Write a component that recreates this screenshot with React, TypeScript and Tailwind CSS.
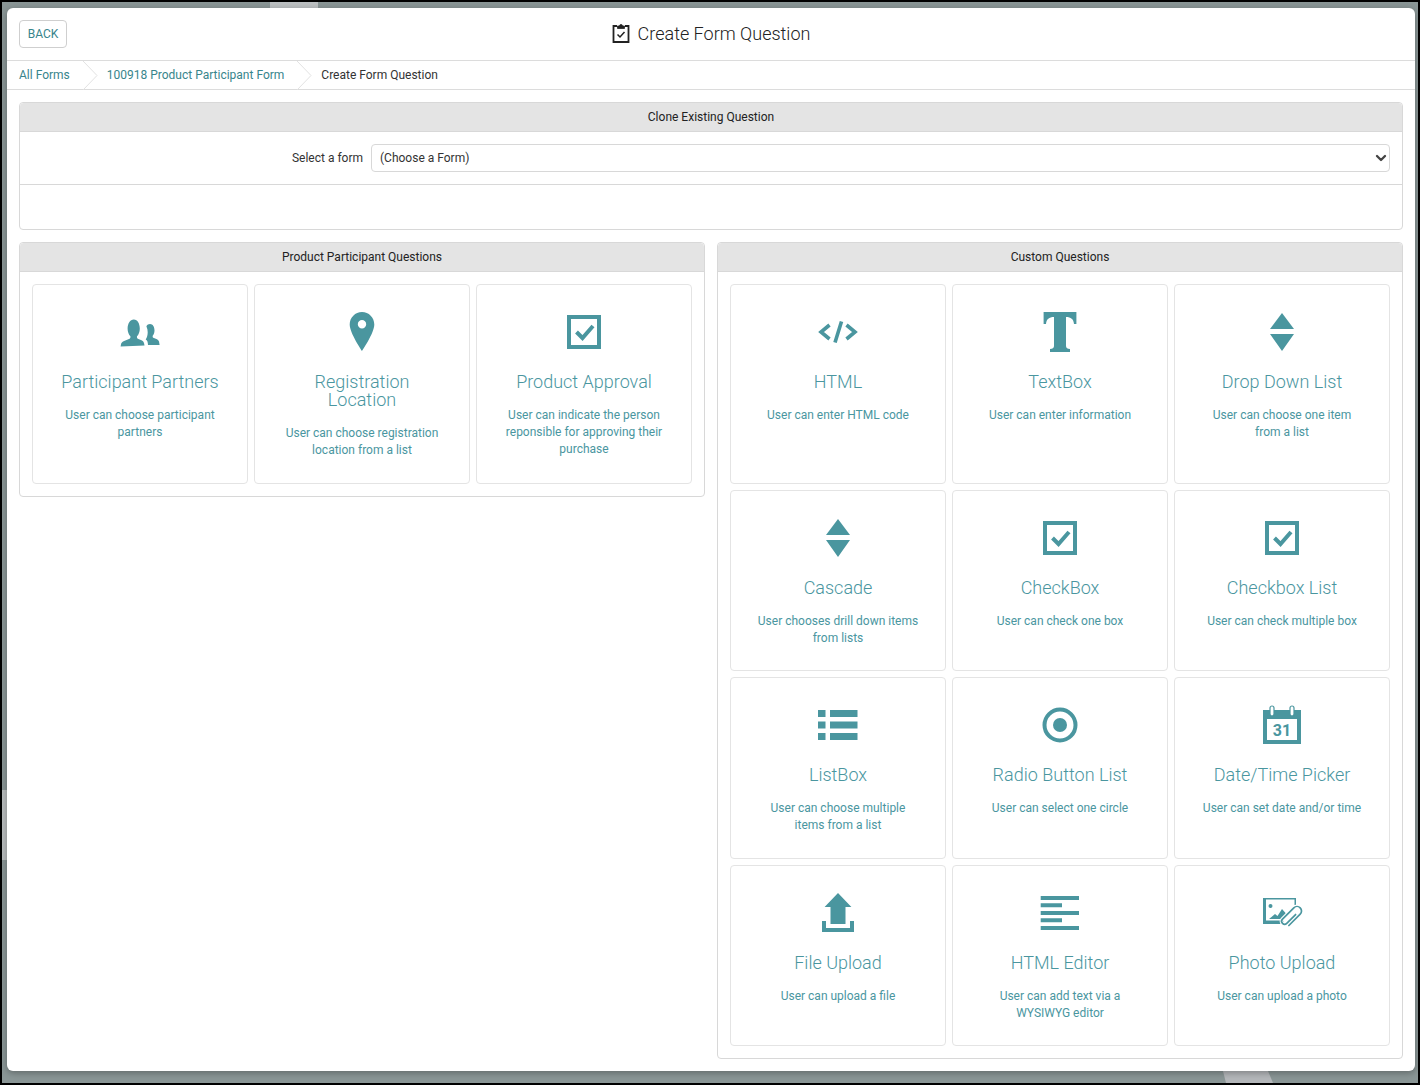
import React from 'react'
import { ChevronDown } from 'lucide-react'

const T = '#4a969f'

function Svg({ children }: { children: React.ReactNode }) {
  return (
    <svg width="44" height="44" viewBox="0 0 44 44" fill={T}>
      {children}
    </svg>
  )
}

const PeopleIcon = () => (
  <Svg>
    <path d="M26.500 35c-.4-3-1-4.300-3-5.200l-3.700-1.600c-.8-.5-1-1.500-.8-2.500 1.600-1.500 2.800-4.400 2.800-7.500 0-5-2.200-9.200-6-9.200s-6.200 4.200-6.200 9.200c0 3.100 1.200 6 2.800 7.500.2 1-.1 2-.8 2.500l-5.500 2.300c-1.600.7-2.600 1.700-3 2.700l-.5 2.800z" transform="translate(0 .5)" />
    <path d="M30 35h11.600l-.6-3.500c-.4-1-1-1.700-2-2.200l-3.700-1.500c-.6-.4-.7-1.200-.6-2 1.100-1.100 1.800-3.100 1.800-5.300 0-3.600-1.600-6.500-4.500-6.500-1.600 0-2.800.9-3.600 2.300.9 2 1.300 4 1.300 6 0 2.700-.7 5.300-2 7.200 1.500.7 2.200 2.400 2.300 5.500z" />
  </Svg>
)

const PinIcon = () => (
  <Svg>
    <path
      fillRule="evenodd"
      d="M22 2C15.200 2 9.700 7.500 9.700 14.500 9.700 23 22 41 22 41s12.300-18 12.300-26.500C34.300 7.500 28.800 2 22 2zm0 8a4.200 4.200 0 1 1 0 8.400 4.200 4.200 0 0 1 0-8.400z"
    />
  </Svg>
)

const CheckIcon = () => (
  <Svg>
    <rect x="7" y="7" width="30" height="30" fill="none" stroke={T} strokeWidth="4" />
    <path d="M14.500 22l6 6L31 16" fill="none" stroke={T} strokeWidth="4" />
  </Svg>
)

const CodeIcon = () => (
  <Svg>
    <path d="M13.500 15L5 22l8.500 7M25.500 11.500L19 32.500M30.500 15L39 22l-8.500 7" fill="none" stroke={T} strokeWidth="3.600" />
  </Svg>
)

const TextIcon = () => (
  <Svg>
    <path d="M5.600 2h32.800v12H36c-.5-5-3-7-8-7v29c0 2 1.500 3 4 3v3H12v-3c2.500 0 4-1 4-3V7c-5 0-7.500 2-8 7H5.600z" />
  </Svg>
)

const SortIcon = () => (
  <Svg>
    <path d="M22 3l12 16H10zM10 24h24L22 41z" />
  </Svg>
)

const ListIcon = () => (
  <Svg>
    <path d="M2 7h7.500v7H2zM14 7h27.500v7H14zM2 18.500h7.500v7H2zM14 18.500h27.500v7H14zM2 30h7.500v7H2zM14 30h27.500v7H14z" />
  </Svg>
)

const RadioIcon = () => (
  <Svg>
    <circle cx="22" cy="22" r="15.500" fill="none" stroke={T} strokeWidth="4" />
    <circle cx="22" cy="22" r="7" />
  </Svg>
)

const CalendarIcon = () => (
  <Svg>
    <path fillRule="evenodd" d="M3 7h38v34H3zm4 9v21h30V16z" />
    <rect x="10" y="3" width="4" height="10" rx="2" fill="#fff" stroke={T} strokeWidth="1.200" />
    <rect x="30" y="3" width="4" height="10" rx="2" fill="#fff" stroke={T} strokeWidth="1.200" />
    <text x="22" y="32.500" textAnchor="middle" fontSize="16" fontWeight="700" fontFamily="Roboto, sans-serif">
      31
    </text>
  </Svg>
)

const UploadIcon = () => (
  <Svg>
    <path d="M22 2l13.400 14H29.500v17h-15V16H8.600zM6 30h4v7h24v-7h4v11H6z" />
  </Svg>
)

const LinesIcon = () => (
  <Svg>
    <path d="M2.700 5H41v4H2.700zM2.700 12.300H24v4H2.700zM2.700 20H41v4H2.700zM2.700 27.300H24v4H2.700zM2.700 35H41v4H2.700z" />
  </Svg>
)

const PhotoIcon = () => (
  <Svg>
    <path d="M3 7h33v7h-1.500v-5.500H6v21h18V33H3z" />
    <circle cx="10.500" cy="15" r="2" />
    <path d="M9 28l6-5 2.500 2 4.500-7 4 4.500L21 28z" />
    <g transform="rotate(45 31 26)" fill="none" strokeLinecap="round">
      <path d="M33.500 21v12.500a3 3 0 0 1-6 0V17.500a4.500 4.500 0 0 1 9 0v16" stroke="#fff" strokeWidth="4" transform="translate(-1 0)" />
      <path d="M33.500 21v12.500a3 3 0 0 1-6 0V17.500a4.500 4.500 0 0 1 9 0v16" stroke={T} strokeWidth="1.700" transform="translate(-1 0)" />
    </g>
  </Svg>
)

interface CardItem {
  title: string
  text: string
  icon: React.ComponentType
}

const productCards: CardItem[] = [
  { title: 'Participant Partners', text: 'User can choose participant partners', icon: PeopleIcon },
  { title: 'Registration Location', text: 'User can choose registration location from a list', icon: PinIcon },
  { title: 'Product Approval', text: 'User can indicate the person reponsible for approving their purchase', icon: CheckIcon },
]

const customRows: { height: string; cards: CardItem[] }[] = [
  {
    height: 'h-[200px]',
    cards: [
      { title: 'HTML', text: 'User can enter HTML code', icon: CodeIcon },
      { title: 'TextBox', text: 'User can enter information', icon: TextIcon },
      { title: 'Drop Down List', text: 'User can choose one item from a list', icon: SortIcon },
    ],
  },
  {
    height: 'h-[181px]',
    cards: [
      { title: 'Cascade', text: 'User chooses drill down items from lists', icon: SortIcon },
      { title: 'CheckBox', text: 'User can check one box', icon: CheckIcon },
      { title: 'Checkbox List', text: 'User can check multiple box', icon: CheckIcon },
    ],
  },
  {
    height: 'h-[182px]',
    cards: [
      { title: 'ListBox', text: 'User can choose multiple items from a list', icon: ListIcon },
      { title: 'Radio Button List', text: 'User can select one circle', icon: RadioIcon },
      { title: 'Date/Time Picker', text: 'User can set date and/or time', icon: CalendarIcon },
    ],
  },
  {
    height: 'h-[181px]',
    cards: [
      { title: 'File Upload', text: 'User can upload a file', icon: UploadIcon },
      { title: 'HTML Editor', text: 'User can add text via a WYSIWYG editor', icon: LinesIcon },
      { title: 'Photo Upload', text: 'User can upload a photo', icon: PhotoIcon },
    ],
  },
]

function Card({ item, height }: { item: CardItem; height: string }) {
  const Icon = item.icon
  return (
    <div className={`${height} w-[216px] shrink-0 rounded border border-[#e4e4e4] bg-white px-[26px] pt-[25px] text-center text-[#4a969f]`}>
      <div className="flex justify-center">
        <Icon />
      </div>
      <div className="mt-[19px] text-[18px] leading-[18px] font-light">{item.title}</div>
      <div className="mt-[16px] text-[12px] leading-[17px]">{item.text}</div>
    </div>
  )
}

function PanelHeader({ title }: { title: string }) {
  return (
    <div className="flex h-[29px] items-center justify-center rounded-t border-b border-[#d8d8d8] bg-[#e4e4e4] text-[12px] text-[#222]">
      {title}
    </div>
  )
}

function Crumb() {
  return (
    <svg width="15" height="29" viewBox="0 0 15 29" className="shrink-0" fill="none" stroke="#e2e2e2">
      <path d="M0 0l14 14.500L0 29" />
    </svg>
  )
}

export default function App() {
  return (
    <div className="h-[1085px] w-[1420px] overflow-hidden bg-black p-[2px] font-['Roboto',sans-serif]">
      <div className="relative h-full w-full bg-[#8a9696] pt-[6px] pr-[3px] pb-[12px] pl-[5px]">
        {/* bits of wallpaper showing behind the window */}
        <div className="absolute top-0 left-[268px] h-[6px] w-[48px] bg-[#bcc0c2]" />
        <div className="absolute top-[788px] left-0 h-[70px] w-[5px] bg-[#b8bcbd]" />
        <div className="absolute bottom-0 left-[1221px] h-[12px] w-[50px] bg-[#b4b7ba] [clip-path:polygon(0_0,90%_0,100%_100%,6%_100%)]" />

        <div className="relative flex h-full flex-col rounded-md bg-white shadow-[0_2px_7px_rgba(0,0,0,0.3)]">
          {/* Title bar */}
          <div className="relative flex h-[53px] shrink-0 items-center justify-center border-b border-[#dcdcdc] pb-[2px]">
            <button className="absolute top-[12px] left-[12px] h-[28px] w-[48px] rounded border border-[#cfcfcf] bg-white text-[12px] text-[#38858c]">
              BACK
            </button>
            <div className="flex items-center gap-[8px] text-[18px] font-light text-[#222]">
              <svg width="18" height="20" viewBox="0 0 18 20" fill="none" stroke="#222">
                <path d="M5 3H1.500v16h15V3H13" strokeWidth="1.800" />
                <path d="M5.500 5.500v-2.500H7.500a1.500 1.500 0 0 1 3 0h2v2.500z" fill="#222" strokeWidth=".8" />
                <path d="M5.500 11.500l2.500 2.500 4.500-5" strokeWidth="1.500" />
              </svg>
              Create Form Question
            </div>
          </div>

          {/* Breadcrumb */}
          <div className="flex h-[29px] shrink-0 items-center border-b border-[#dcdcdc] pl-[12px] text-[12px]">
            <a className="text-[#38858c]">All Forms</a>
            <span className="mr-[9px] ml-[13px] flex"><Crumb /></span>
            <a className="text-[#38858c]">100918 Product Participant Form</a>
            <span className="mr-[9px] ml-[13px] flex"><Crumb /></span>
            <span className="text-[#333]">Create Form Question</span>
          </div>

          <div className="flex flex-col gap-[12px] px-[12px] pt-[12px]">
            {/* Clone panel */}
            <div className="rounded border border-[#d8d8d8]">
              <PanelHeader title="Clone Existing Question" />
              <div className="flex h-[53px] items-center gap-[8px] border-b border-[#d8d8d8] pr-[12px]">
                <label className="w-[343px] text-right text-[12px] text-[#333]">Select a form</label>
                <div className="relative flex-1">
                  <select className="h-[28px] w-full appearance-none rounded border border-[#d8d8d8] bg-white pl-2 text-[12px] text-[#333]">
                    <option>(Choose a Form)</option>
                  </select>
                  <ChevronDown size={16} strokeWidth={3.500} className="absolute top-[6px] right-[1px] text-[#444]" />
                </div>
              </div>
              <div className="h-[44px]" />
            </div>

            <div className="flex items-start gap-[12px]">
              {/* Product questions */}
              <div className="w-[686px] rounded border border-[#d8d8d8]">
                <PanelHeader title="Product Participant Questions" />
                <div className="flex gap-[6px] p-[12px]">
                  {productCards.map((item) => (
                    <Card key={item.title} item={item} height="h-[200px]" />
                  ))}
                </div>
              </div>

              {/* Custom questions */}
              <div className="w-[686px] rounded border border-[#d8d8d8]">
                <PanelHeader title="Custom Questions" />
                <div className="flex flex-col gap-[6px] p-[12px]">
                  {customRows.map((row) => (
                    <div key={row.cards[0].title} className="flex gap-[6px]">
                      {row.cards.map((item) => (
                        <Card key={item.title} item={item} height={row.height} />
                      ))}
                    </div>
                  ))}
                </div>
              </div>
            </div>
          </div>
        </div>
      </div>
    </div>
  )
}
